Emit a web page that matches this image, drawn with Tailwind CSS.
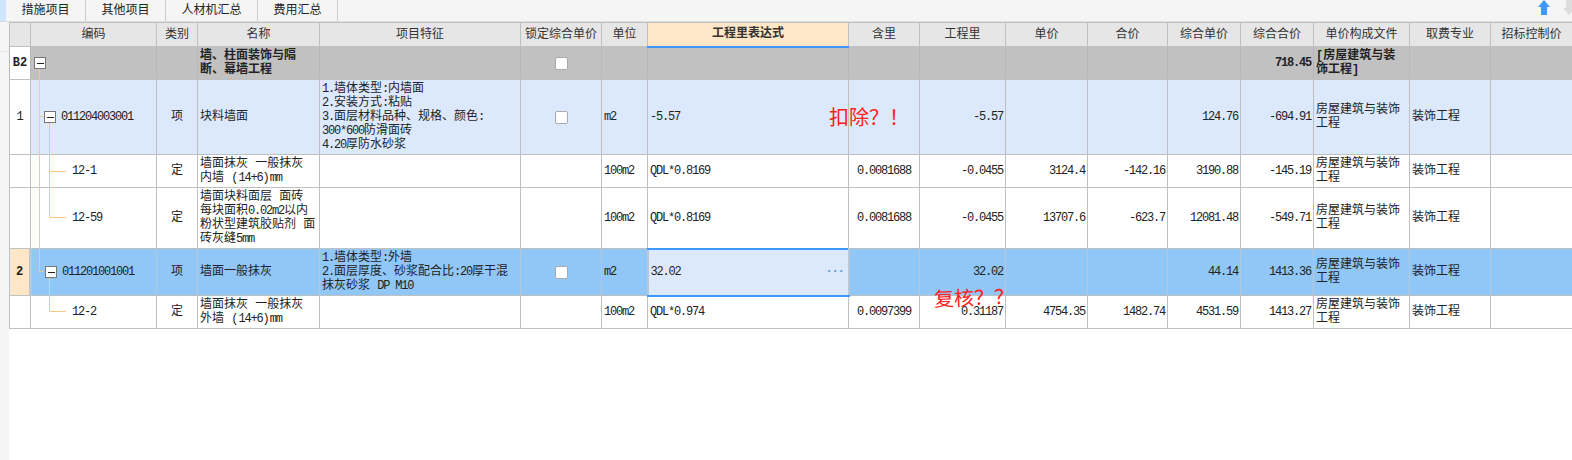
<!DOCTYPE html>
<html lang="zh-CN">
<head>
<meta charset="UTF-8">
<title>分部分项</title>
<script src="https://cdn.jsdelivr.net/npm/@tailwindcss/browser@4"></script>
</head>
<body class="bg-white">
<div class="relative w-[1572px] h-[460px] overflow-hidden text-[12px] leading-[14px] text-[#222] font-['Liberation_Mono','Noto_Sans_CJK_SC',monospace]">

    <!-- 顶部页签 -->
    <div class="flex h-[22px] bg-[#f5f5f5] border-b border-[#dddddd]">
        <div class="w-[6px] bg-[#cfe5ff]"></div>
        <div class="w-[80px] flex items-center justify-center border-r border-[#cccccc]">措施项目</div>
        <div class="w-[80px] flex items-center justify-center border-r border-[#cccccc]">其他项目</div>
        <div class="w-[92px] flex items-center justify-center border-r border-[#cccccc]">人材机汇总</div>
        <div class="w-[80px] flex items-center justify-center border-r border-[#cccccc]">费用汇总</div>
        <div class="ml-auto flex gap-[13px] -mr-[3px]">
            <svg class="w-[12px] h-[15px]" viewBox="0 0 12 15"><path d="M6 0L12 7H9V15H3V7H0Z" fill="#3f97fb"/></svg>
            <svg class="w-[12px] h-[15px]" viewBox="0 0 12 15"><path d="M3 0H9V8H12L6 15L0 8H3Z" fill="#dddddd"/></svg>
        </div>
    </div>

    <div class="flex items-start">
        <!-- 左侧窄条 -->
        <div class="w-[9px] h-[438px] bg-[#f5f5f5] shrink-0 pt-[29px]"><div class="h-px bg-[#e4e4e4]"></div></div>

        <table class="table-fixed border-collapse w-[1563px] shrink-0 [&_td]:border [&_td]:border-[#c0c0c0] [&_td]:px-[2px] [&_td]:py-0">
            <colgroup>
                <col class="w-[21px]"><col class="w-[126px]"><col class="w-[41px]"><col class="w-[122px]"><col class="w-[201px]"><col class="w-[81px]"><col class="w-[46px]"><col class="w-[201px]"><col class="w-[71px]"><col class="w-[86px]"><col class="w-[82px]"><col class="w-[80px]"><col class="w-[73px]"><col class="w-[73px]"><col class="w-[96px]"><col class="w-[81px]"><col class="w-[82px]">
            </colgroup>
            <tbody>
                <!-- 表头 -->
                <tr class="h-[24px] bg-[#e6e6e6] text-center text-[#333]">
                    <td></td><td>编码</td><td>类别</td><td>名称</td><td>项目特征</td><td class="whitespace-nowrap">锁定综合单价</td><td>单位</td>
                    <td class="bg-[#ffe6c7] font-bold border-b-2! border-b-[#3f97fb]!">工程里表达式</td>
                    <td>含里</td><td>工程里</td><td>单价</td><td>合价</td><td>综合单价</td><td>综合合价</td><td>单价构成文件</td><td>取费专业</td><td class="whitespace-nowrap">招标控制价</td>
                </tr>

                <!-- 分部 B2 -->
                <tr class="h-[33px] bg-[#c1c1c1] font-bold [&>td]:border-x-[#b8b8b8]!">
                    <td class="bg-white text-center">B2</td>
                    <td class="px-0!"><div class="pl-[3px]"><div class="relative z-10 w-[12px] h-[12px] border border-[#777] bg-white flex items-center justify-center"><div class="w-[7px] h-px bg-[#222]"></div></div></div></td>
                    <td></td>
                    <td>墙、柱面装饰与隔<br>断、幕墙工程</td>
                    <td></td>
                    <td><div class="w-[13px] h-[13px] mx-auto bg-white border border-[#aaaaaa] rounded-[2px]"></div></td>
                    <td></td><td></td><td></td><td></td><td></td><td></td><td></td>
                    <td class="text-right tracking-[-1.2px]">718.45</td>
                    <td>[房屋建筑与装<br>饰工程]</td>
                    <td></td><td></td>
                </tr>

                <!-- 清单 块料墙面 -->
                <tr class="h-[75px] bg-[#dce9fd]">
                    <td class="bg-white text-center">1</td>
                    <td class="px-0!"><div class="flex items-center gap-[5px] pl-[13px]"><div class="relative z-10 w-[12px] h-[12px] border border-[#777] bg-white flex items-center justify-center"><div class="w-[7px] h-px bg-[#222]"></div></div><span class="tracking-[-1.2px]">011204003001</span></div></td>
                    <td class="text-center">项</td>
                    <td>块料墙面</td>
                    <td><span class="tracking-[-1.2px]">1.</span>墙体类型<span class="tracking-[-1.2px]">:</span>内墙面<br><span class="tracking-[-1.2px]">2.</span>安装方式<span class="tracking-[-1.2px]">:</span>粘贴<br><span class="tracking-[-1.2px]">3.</span>面层材料品种、规格、颜色<span class="tracking-[-1.2px]">:</span><br><span class="tracking-[-1.2px]">300*600</span>防滑面砖<br><span class="tracking-[-1.2px]">4.20</span>厚防水砂浆</td>
                    <td><div class="w-[13px] h-[13px] mx-auto bg-white border border-[#aaaaaa] rounded-[2px]"></div></td>
                    <td class="tracking-[-1.2px]">m2</td>
                    <td class="tracking-[-1.2px]">-5.57</td>
                    <td></td>
                    <td class="text-right tracking-[-1.2px]">-5.57</td>
                    <td></td><td></td>
                    <td class="text-right tracking-[-1.2px]">124.76</td>
                    <td class="text-right tracking-[-1.2px]">-694.91</td>
                    <td>房屋建筑与装饰<br>工程</td>
                    <td>装饰工程</td>
                    <td></td>
                </tr>

                <!-- 定额 12-1 -->
                <tr class="h-[33px]">
                    <td></td>
                    <td class="pl-[41px]! tracking-[-1.2px]">12-1</td>
                    <td class="text-center">定</td>
                    <td>墙面抹灰 一般抹灰<br>内墙 (<span class="tracking-[-1.2px]">14+6</span>)<span class="tracking-[-1.2px]">mm</span></td>
                    <td></td><td></td>
                    <td class="tracking-[-1.2px]">100m2</td>
                    <td class="tracking-[-1.2px]">QDL*0.8169</td>
                    <td class="text-center tracking-[-1.2px]">0.0081688</td>
                    <td class="text-right tracking-[-1.2px]">-0.0455</td>
                    <td class="text-right tracking-[-1.2px]">3124.4</td>
                    <td class="text-right tracking-[-1.2px]">-142.16</td>
                    <td class="text-right tracking-[-1.2px]">3190.88</td>
                    <td class="text-right tracking-[-1.2px]">-145.19</td>
                    <td>房屋建筑与装饰<br>工程</td>
                    <td>装饰工程</td>
                    <td></td>
                </tr>

                <!-- 定额 12-59 -->
                <tr class="h-[61px]">
                    <td></td>
                    <td class="pl-[41px]! tracking-[-1.2px]">12-59</td>
                    <td class="text-center">定</td>
                    <td>墙面块料面层 面砖<br>每块面积<span class="tracking-[-1.2px]">0.02m2</span>以内<br>粉状型建筑胶贴剂 面<br>砖灰缝<span class="tracking-[-1.2px]">5mm</span></td>
                    <td></td><td></td>
                    <td class="tracking-[-1.2px]">100m2</td>
                    <td class="tracking-[-1.2px]">QDL*0.8169</td>
                    <td class="text-center tracking-[-1.2px]">0.0081688</td>
                    <td class="text-right tracking-[-1.2px]">-0.0455</td>
                    <td class="text-right tracking-[-1.2px]">13707.6</td>
                    <td class="text-right tracking-[-1.2px]">-623.7</td>
                    <td class="text-right tracking-[-1.2px]">12081.48</td>
                    <td class="text-right tracking-[-1.2px]">-549.71</td>
                    <td>房屋建筑与装饰<br>工程</td>
                    <td>装饰工程</td>
                    <td></td>
                </tr>

                <!-- 清单 墙面一般抹灰 (选中行) -->
                <tr class="h-[47px] bg-[#90c7f6] [&>td]:border-x-[#b4c8da]!">
                    <td class="bg-[#ffe6c7] text-center font-bold border-r-[3px]! border-r-[#3f97fb]!">2</td>
                    <td class="px-0!"><div class="flex items-center gap-[5px] pl-[13px]"><div class="relative z-10 w-[12px] h-[12px] border border-[#777] bg-white flex items-center justify-center"><div class="w-[7px] h-px bg-[#222]"></div></div><span class="tracking-[-1.2px]">011201001001</span></div></td>
                    <td class="text-center">项</td>
                    <td>墙面一般抹灰</td>
                    <td><span class="tracking-[-1.2px]">1.</span>墙体类型<span class="tracking-[-1.2px]">:</span>外墙<br><span class="tracking-[-1.2px]">2.</span>面层厚度、砂浆配合比<span class="tracking-[-1.2px]">:20</span>厚干混<br>抹灰砂浆 <span class="tracking-[-1.2px]">DP M10</span></td>
                    <td><div class="w-[13px] h-[13px] mx-auto bg-white border border-[#aaaaaa] rounded-[2px]"></div></td>
                    <td class="tracking-[-1.2px]">m2</td>
                    <td class="bg-[#dce9fd] border-2! border-[#3f97fb]!">
                        <div class="flex items-center justify-between pr-[2px]"><span class="tracking-[-1.2px]">32.02</span><span class="text-[#5b9bd8] font-bold tracking-[-1.2px]">···</span></div>
                    </td>
                    <td></td>
                    <td class="text-right tracking-[-1.2px]">32.02</td>
                    <td></td><td></td>
                    <td class="text-right tracking-[-1.2px]">44.14</td>
                    <td class="text-right tracking-[-1.2px]">1413.36</td>
                    <td>房屋建筑与装饰<br>工程</td>
                    <td>装饰工程</td>
                    <td></td>
                </tr>

                <!-- 定额 12-2 -->
                <tr class="h-[33px]">
                    <td></td>
                    <td class="pl-[41px]! tracking-[-1.2px]">12-2</td>
                    <td class="text-center">定</td>
                    <td>墙面抹灰 一般抹灰<br>外墙 (<span class="tracking-[-1.2px]">14+6</span>)<span class="tracking-[-1.2px]">mm</span></td>
                    <td></td><td></td>
                    <td class="tracking-[-1.2px]">100m2</td>
                    <td class="tracking-[-1.2px]">QDL*0.974</td>
                    <td class="text-center tracking-[-1.2px]">0.0097399</td>
                    <td class="text-right tracking-[-1.2px]">0.31187</td>
                    <td class="text-right tracking-[-1.2px]">4754.35</td>
                    <td class="text-right tracking-[-1.2px]">1482.74</td>
                    <td class="text-right tracking-[-1.2px]">4531.59</td>
                    <td class="text-right tracking-[-1.2px]">1413.27</td>
                    <td>房屋建筑与装饰<br>工程</td>
                    <td>装饰工程</td>
                    <td></td>
                </tr>
            </tbody>
        </table>
    </div>

    <!-- 树形连接线 -->
    <svg class="absolute left-0 top-0 w-[100px] h-[340px]" viewBox="0 0 100 340" fill="none" stroke="#fcc684">
        <path d="M39.5 68V271.5H43M39.5 116.5H43"/>
        <path d="M49.5 122V217.5H66M49.5 171.5H66"/>
        <path d="M49.5 277V311.5H66"/>
    </svg>

    <!-- 批注 -->
    <div class="absolute left-[829px] top-[104px] text-[20px] leading-[26px] text-[#ff2020] whitespace-nowrap font-['Noto_Sans_CJK_SC',sans-serif]">扣除？！</div>
    <div class="absolute left-[934px] top-[284px] text-[20px] leading-[26px] text-[#ff2020] whitespace-nowrap font-['Noto_Sans_CJK_SC',sans-serif] -rotate-2">复核？？</div>
</div>
</body>
</html>
